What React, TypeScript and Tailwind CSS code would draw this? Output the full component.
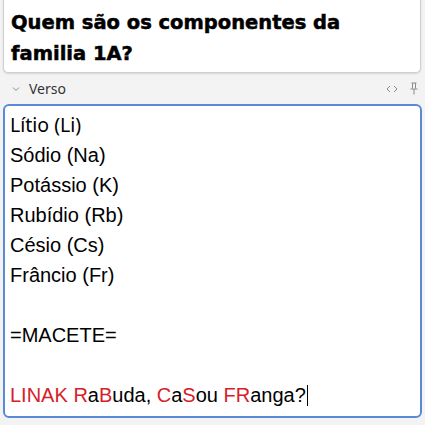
import React from "react";

const R = ({ children }: { children: React.ReactNode }) => (
  <span className="text-[#d6202a]">{children}</span>
);

export default function App() {
  return (
    <div className="w-[425px] h-[425px] overflow-hidden bg-[#f3f3f3] px-[3px] flex flex-col">
      <div className="-mt-[10px] h-[83px] mr-[1px] bg-white border border-[#cfcfcf] rounded-[5px] shadow-[0_1px_2px_rgba(0,0,0,0.12)] px-[7px] pt-[16px]">
        <div
          className="text-[19.5px] leading-[31px] font-bold text-black [-webkit-text-stroke:0.5px_black]"
          style={{ fontFamily: '"DejaVu Sans", sans-serif' }}
        >
          Quem são os componentes da
          <br />
          familia 1A?
        </div>
      </div>
      <div className="h-[31px] flex items-center pl-[8px] pr-[4px] text-[#333]" style={{ fontFamily: '"Noto Sans", sans-serif' }}>
        <svg width="10" height="10" viewBox="0 0 10 10" className="mt-[1px]">
          <path d="M2 3.5 L5 6.5 L8 3.5" fill="none" stroke="#8a8a8a" strokeWidth="1" />
        </svg>
        <span className="ml-[8px] text-[14px] leading-none">Verso</span>
        <div className="ml-auto flex items-center gap-[12px]">
          <svg width="12" height="10" viewBox="0 0 12 10">
            <path d="M4 2 L1 5 L4 8 M8 2 L11 5 L8 8" fill="none" stroke="#8a8a8a" strokeWidth="1" />
          </svg>
          <svg width="8" height="13" viewBox="0 0 8 13">
            <path d="M1.5 1 H6.5 M2.5 1 V6.5 M5.5 1 V6.5 M0.5 7 H7.5 M4 7 V12.5" fill="none" stroke="#8a8a8a" strokeWidth="1" />
          </svg>
        </div>
      </div>
      <div className="h-[314px] bg-white border-2 border-[#5a8ad6] rounded-[6px] px-[5px] pt-[4px] text-black">
        <div className="text-[20px] leading-[30px]" style={{ fontFamily: '"Liberation Sans", Arial, sans-serif' }}>
          <div style={{ fontFamily: '"Noto Sans", sans-serif' }} className="text-[19.5px]">Lítio (Li)</div>
          <div>Sódio (Na)</div>
          <div>Potássio (K)</div>
          <div>Rubídio (Rb)</div>
          <div>Césio (Cs)</div>
          <div>Frâncio (Fr)</div>
          <div className="h-[30px]"></div>
          <div>=MACETE=</div>
          <div className="h-[30px]"></div>
          <div className="flex items-center">
            <span>
              <R>LINAK</R> <R>R</R>a<R>B</R>uda, <R>C</R>a<R>S</R>ou <R>FR</R>anga?
            </span>
            <span className="inline-block w-[1px] h-[21px] bg-black ml-[1px]"></span>
          </div>
        </div>
      </div>
    </div>
  );
}
